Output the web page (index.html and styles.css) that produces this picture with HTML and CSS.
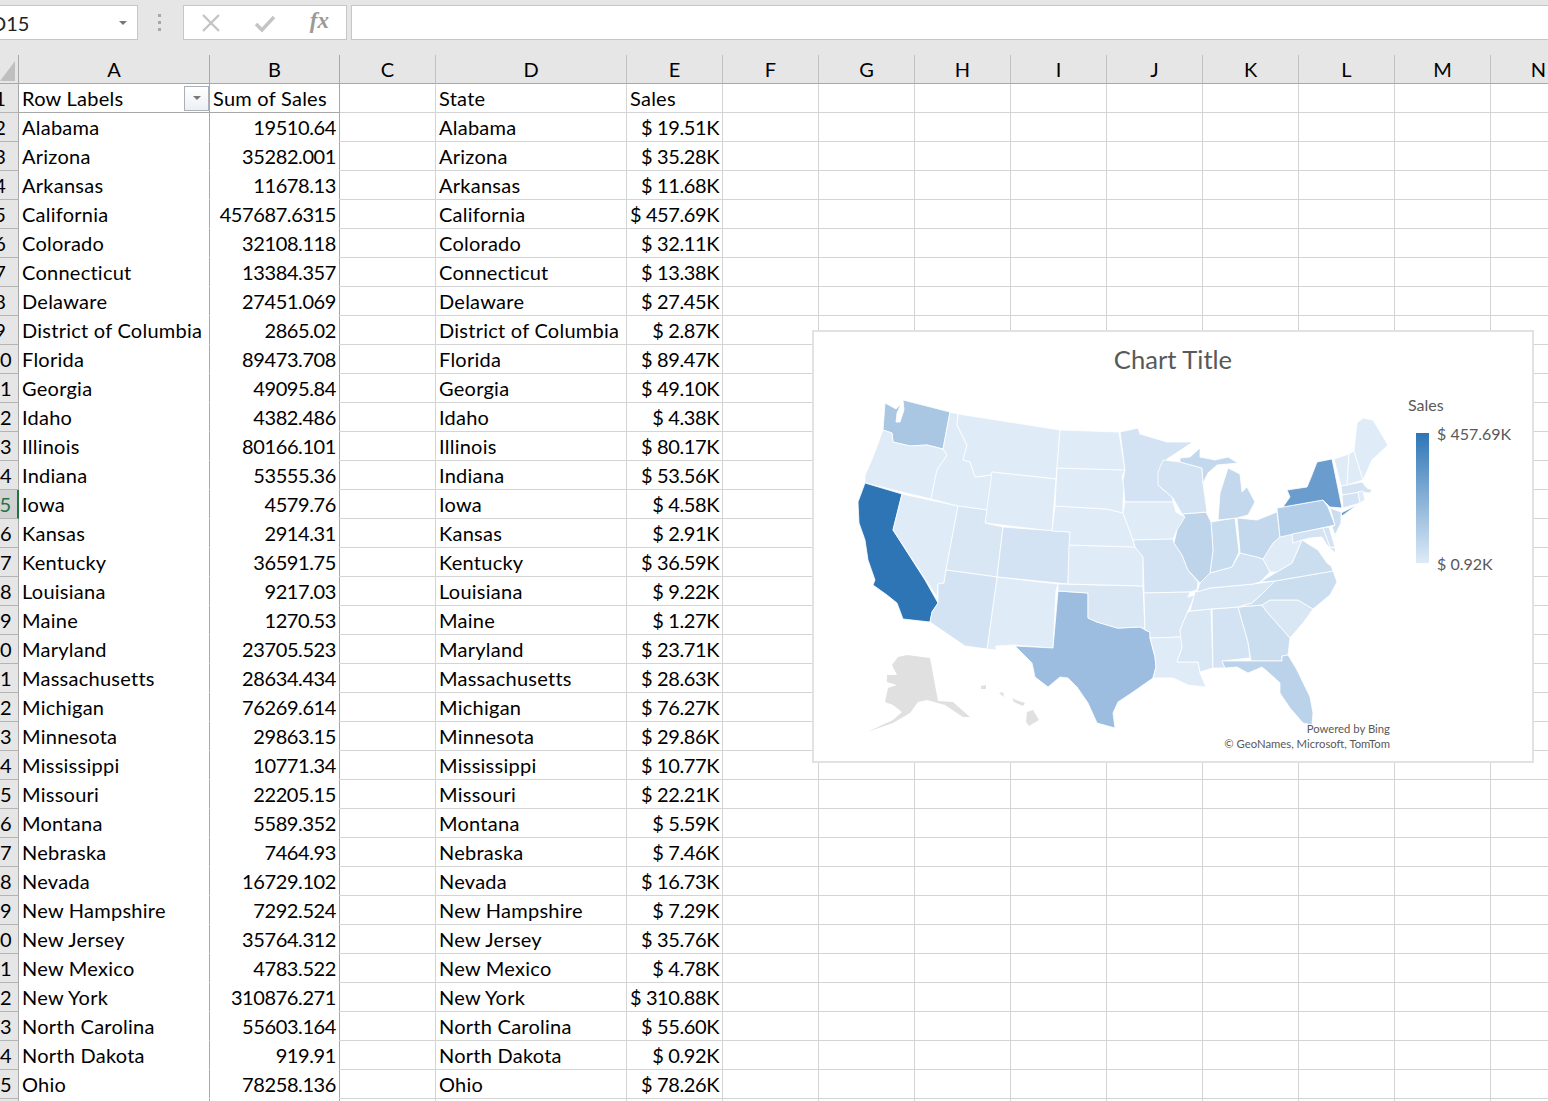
FILE: index.html
```html
<!DOCTYPE html>
<html lang="en">
<head>
  <meta charset="UTF-8">
  <title>Sales by State</title>
  <link rel="stylesheet" href="styles.css">
</head>
<body>

<!-- formula bar -->
<div class="formula-bar">
  <div class="name-box"><span>D15</span><i class="caret"></i></div>
  <div class="grip"><b></b><b></b><b></b></div>
  <div class="fx-box">
    <svg class="fx-icon" width="20" height="20" viewBox="0 0 20 20"><path d="M2 2 L18 18 M18 2 L2 18" fill="none" stroke="#c4c4c4" stroke-width="2.4"/></svg>
    <svg class="fx-icon" width="22" height="20" viewBox="0 0 22 20"><path d="M2 11 L8 17 L20 4" fill="none" stroke="#c4c4c4" stroke-width="3.4"/></svg>
    <span class="fx-text">fx</span>
  </div>
  <div class="formula-input"></div>
</div>

<!-- sheet -->
<table class="sheet">
  <colgroup>
    <col class="c-row"><col class="c-wide"><col class="c-b"><col class="c-std"><col class="c-wide"><col class="c-std">
    <col class="c-std"><col class="c-std"><col class="c-std"><col class="c-std"><col class="c-std"><col class="c-std"><col class="c-std"><col class="c-std"><col class="c-std">
  </colgroup>
  <thead>
    <tr>
      <th class="corner"><svg width="16" height="21" viewBox="0 0 16 21"><polygon points="15,0 15,20 0,20" fill="#bfbfbf"/></svg></th>
      <th class="dark">A</th><th class="dark">B</th><th>C</th><th>D</th><th>E</th><th>F</th><th>G</th><th>H</th><th>I</th><th>J</th><th>K</th><th>L</th><th>M</th><th>N</th>
    </tr>
  </thead>
  <tbody>
    <tr class="pivot-head"><th>1</th><td class="p"><div class="filter-cell">Row Labels<span class="filter-btn"><i class="caret"></i></span></div></td><td class="p">Sum of Sales</td><td></td><td>State</td><td>Sales</td><td></td><td></td><td></td><td></td><td></td><td></td><td></td><td></td><td></td></tr>
    <tr><th>2</th><td class="p">Alabama</td><td class="p n">19510.64</td><td></td><td>Alabama</td><td class="n">$ 19.51K</td><td></td><td></td><td></td><td></td><td></td><td></td><td></td><td></td><td></td></tr>
    <tr><th>3</th><td class="p">Arizona</td><td class="p n">35282.001</td><td></td><td>Arizona</td><td class="n">$ 35.28K</td><td></td><td></td><td></td><td></td><td></td><td></td><td></td><td></td><td></td></tr>
    <tr><th>4</th><td class="p">Arkansas</td><td class="p n">11678.13</td><td></td><td>Arkansas</td><td class="n">$ 11.68K</td><td></td><td></td><td></td><td></td><td></td><td></td><td></td><td></td><td></td></tr>
    <tr><th>5</th><td class="p">California</td><td class="p n">457687.6315</td><td></td><td>California</td><td class="n">$ 457.69K</td><td></td><td></td><td></td><td></td><td></td><td></td><td></td><td></td><td></td></tr>
    <tr><th>6</th><td class="p">Colorado</td><td class="p n">32108.118</td><td></td><td>Colorado</td><td class="n">$ 32.11K</td><td></td><td></td><td></td><td></td><td></td><td></td><td></td><td></td><td></td></tr>
    <tr><th>7</th><td class="p">Connecticut</td><td class="p n">13384.357</td><td></td><td>Connecticut</td><td class="n">$ 13.38K</td><td></td><td></td><td></td><td></td><td></td><td></td><td></td><td></td><td></td></tr>
    <tr><th>8</th><td class="p">Delaware</td><td class="p n">27451.069</td><td></td><td>Delaware</td><td class="n">$ 27.45K</td><td></td><td></td><td></td><td></td><td></td><td></td><td></td><td></td><td></td></tr>
    <tr><th>9</th><td class="p">District of Columbia</td><td class="p n">2865.02</td><td></td><td>District of Columbia</td><td class="n">$ 2.87K</td><td></td><td></td><td></td><td></td><td></td><td></td><td></td><td></td><td></td></tr>
    <tr><th>10</th><td class="p">Florida</td><td class="p n">89473.708</td><td></td><td>Florida</td><td class="n">$ 89.47K</td><td></td><td></td><td></td><td></td><td></td><td></td><td></td><td></td><td></td></tr>
    <tr><th>11</th><td class="p">Georgia</td><td class="p n">49095.84</td><td></td><td>Georgia</td><td class="n">$ 49.10K</td><td></td><td></td><td></td><td></td><td></td><td></td><td></td><td></td><td></td></tr>
    <tr><th>12</th><td class="p">Idaho</td><td class="p n">4382.486</td><td></td><td>Idaho</td><td class="n">$ 4.38K</td><td></td><td></td><td></td><td></td><td></td><td></td><td></td><td></td><td></td></tr>
    <tr><th>13</th><td class="p">Illinois</td><td class="p n">80166.101</td><td></td><td>Illinois</td><td class="n">$ 80.17K</td><td></td><td></td><td></td><td></td><td></td><td></td><td></td><td></td><td></td></tr>
    <tr><th>14</th><td class="p">Indiana</td><td class="p n">53555.36</td><td></td><td>Indiana</td><td class="n">$ 53.56K</td><td></td><td></td><td></td><td></td><td></td><td></td><td></td><td></td><td></td></tr>
    <tr><th class="active">15</th><td class="p">Iowa</td><td class="p n">4579.76</td><td></td><td>Iowa</td><td class="n">$ 4.58K</td><td></td><td></td><td></td><td></td><td></td><td></td><td></td><td></td><td></td></tr>
    <tr><th>16</th><td class="p">Kansas</td><td class="p n">2914.31</td><td></td><td>Kansas</td><td class="n">$ 2.91K</td><td></td><td></td><td></td><td></td><td></td><td></td><td></td><td></td><td></td></tr>
    <tr><th>17</th><td class="p">Kentucky</td><td class="p n">36591.75</td><td></td><td>Kentucky</td><td class="n">$ 36.59K</td><td></td><td></td><td></td><td></td><td></td><td></td><td></td><td></td><td></td></tr>
    <tr><th>18</th><td class="p">Louisiana</td><td class="p n">9217.03</td><td></td><td>Louisiana</td><td class="n">$ 9.22K</td><td></td><td></td><td></td><td></td><td></td><td></td><td></td><td></td><td></td></tr>
    <tr><th>19</th><td class="p">Maine</td><td class="p n">1270.53</td><td></td><td>Maine</td><td class="n">$ 1.27K</td><td></td><td></td><td></td><td></td><td></td><td></td><td></td><td></td><td></td></tr>
    <tr><th>20</th><td class="p">Maryland</td><td class="p n">23705.523</td><td></td><td>Maryland</td><td class="n">$ 23.71K</td><td></td><td></td><td></td><td></td><td></td><td></td><td></td><td></td><td></td></tr>
    <tr><th>21</th><td class="p">Massachusetts</td><td class="p n">28634.434</td><td></td><td>Massachusetts</td><td class="n">$ 28.63K</td><td></td><td></td><td></td><td></td><td></td><td></td><td></td><td></td><td></td></tr>
    <tr><th>22</th><td class="p">Michigan</td><td class="p n">76269.614</td><td></td><td>Michigan</td><td class="n">$ 76.27K</td><td></td><td></td><td></td><td></td><td></td><td></td><td></td><td></td><td></td></tr>
    <tr><th>23</th><td class="p">Minnesota</td><td class="p n">29863.15</td><td></td><td>Minnesota</td><td class="n">$ 29.86K</td><td></td><td></td><td></td><td></td><td></td><td></td><td></td><td></td><td></td></tr>
    <tr><th>24</th><td class="p">Mississippi</td><td class="p n">10771.34</td><td></td><td>Mississippi</td><td class="n">$ 10.77K</td><td></td><td></td><td></td><td></td><td></td><td></td><td></td><td></td><td></td></tr>
    <tr><th>25</th><td class="p">Missouri</td><td class="p n">22205.15</td><td></td><td>Missouri</td><td class="n">$ 22.21K</td><td></td><td></td><td></td><td></td><td></td><td></td><td></td><td></td><td></td></tr>
    <tr><th>26</th><td class="p">Montana</td><td class="p n">5589.352</td><td></td><td>Montana</td><td class="n">$ 5.59K</td><td></td><td></td><td></td><td></td><td></td><td></td><td></td><td></td><td></td></tr>
    <tr><th>27</th><td class="p">Nebraska</td><td class="p n">7464.93</td><td></td><td>Nebraska</td><td class="n">$ 7.46K</td><td></td><td></td><td></td><td></td><td></td><td></td><td></td><td></td><td></td></tr>
    <tr><th>28</th><td class="p">Nevada</td><td class="p n">16729.102</td><td></td><td>Nevada</td><td class="n">$ 16.73K</td><td></td><td></td><td></td><td></td><td></td><td></td><td></td><td></td><td></td></tr>
    <tr><th>29</th><td class="p">New Hampshire</td><td class="p n">7292.524</td><td></td><td>New Hampshire</td><td class="n">$ 7.29K</td><td></td><td></td><td></td><td></td><td></td><td></td><td></td><td></td><td></td></tr>
    <tr><th>30</th><td class="p">New Jersey</td><td class="p n">35764.312</td><td></td><td>New Jersey</td><td class="n">$ 35.76K</td><td></td><td></td><td></td><td></td><td></td><td></td><td></td><td></td><td></td></tr>
    <tr><th>31</th><td class="p">New Mexico</td><td class="p n">4783.522</td><td></td><td>New Mexico</td><td class="n">$ 4.78K</td><td></td><td></td><td></td><td></td><td></td><td></td><td></td><td></td><td></td></tr>
    <tr><th>32</th><td class="p">New York</td><td class="p n">310876.271</td><td></td><td>New York</td><td class="n">$ 310.88K</td><td></td><td></td><td></td><td></td><td></td><td></td><td></td><td></td><td></td></tr>
    <tr><th>33</th><td class="p">North Carolina</td><td class="p n">55603.164</td><td></td><td>North Carolina</td><td class="n">$ 55.60K</td><td></td><td></td><td></td><td></td><td></td><td></td><td></td><td></td><td></td></tr>
    <tr><th>34</th><td class="p">North Dakota</td><td class="p n">919.91</td><td></td><td>North Dakota</td><td class="n">$ 0.92K</td><td></td><td></td><td></td><td></td><td></td><td></td><td></td><td></td><td></td></tr>
    <tr><th>35</th><td class="p">Ohio</td><td class="p n">78258.136</td><td></td><td>Ohio</td><td class="n">$ 78.26K</td><td></td><td></td><td></td><td></td><td></td><td></td><td></td><td></td><td></td></tr>
    <tr><th></th><td class="p"></td><td class="p"></td><td></td><td></td><td></td><td></td><td></td><td></td><td></td><td></td><td></td><td></td><td></td><td></td></tr>
  </tbody>
</table>

<!-- map chart, floats over the sheet -->
<div class="chart">
  <svg class="map" width="718" height="429" viewBox="814 332 718 429">
    <g class="states">
      <polygon class="wa" points="885,403 896,409 901,404 897,413 896,422 900,422 904,410 903,400 950,412 943,449 927,445 910,446 893,442 892,433 883,430"/>
      <polygon class="lt" points="883,430 892,433 893,442 910,446 927,445 943,449 947,455 937,470 931,499 865,483 865,475 873,457"/>
      <polygon class="ca" points="865,483 902,494 893,530 925,580 938,603 932,612 930,622 903,619 897,603 887,595 873,585 875,580 868,560 865,540 859,523 858,502"/>
      <polygon class="lt" points="902,494 958,506 946,570 944,583 938,584 937,597 893,530"/>
      <polygon class="lt" points="950,412 958,414 957,425 967,445 963,460 970,462 975,477 992,475 987,510 958,506 931,499 937,470 947,455 943,449"/>
      <polygon class="lt" points="958,414 1060,430 1057,468 1056,479 992,472 991,475 975,477 970,462 963,460 967,445 957,425"/>
      <polygon class="lt" points="992,472 1056,479 1052,531 985,523"/>
      <polygon class="m1" points="958,506 987,510 985,523 1003,527 997,577 946,570"/>
      <polygon class="m2" points="1003,527 1070,532 1068,584 997,577"/>
      <polygon class="lt" points="997,577 1058,584 1056,591 1053,648 1014,645 996,646 996,650 987,649"/>
      <polygon class="m2" points="997,577 946,570 944,583 938,584 938,603 932,612 930,622 965,646 987,649"/>
      <polygon class="tx" points="1058,591 1088,593 1088,618 1097,622 1117,628 1120,628 1140,627 1150,632 1150,638 1155,657 1156,667 1153,678 1133,692 1118,702 1113,713 1115,728 1097,723 1088,703 1077,687 1068,678 1060,677 1048,687 1035,677 1032,663 1015,646 1053,648"/>
      <polygon class="m1" points="1058,584 1143,586 1145,630 1150,632 1140,627 1120,628 1117,628 1097,622 1088,618 1088,593 1058,591"/>
      <polygon class="lt" points="1069,545 1135,547 1143,557 1143,586 1068,584"/>
      <polygon class="lt" points="1055,506 1107,509 1123,513 1130,532 1135,547 1069,545 1070,532 1052,531"/>
      <polygon class="lt" points="1057,468 1125,470 1122,477 1124,485 1123,502 1123,513 1107,509 1055,506"/>
      <polygon class="lt" points="1060,430 1119,432 1125,470 1057,468"/>
      <polygon class="m2" points="1120,432 1138,428 1140,434 1167,442 1193,442 1167,459 1158,472 1160,487 1172,497 1173,502 1125,502 1123,480 1125,470"/>
      <polygon class="lt" points="1125,502 1173,502 1176,512 1185,517 1182,527 1177,530 1173,539 1133,540 1123,513"/>
      <polygon class="m2" points="1133,540 1173,539 1174,543 1182,555 1188,570 1198,582 1197,590 1190,592 1144,593 1143,557 1135,547"/>
      <polygon class="m1" points="1144,593 1190,592 1188,597 1195,595 1187,613 1180,630 1182,637 1150,638 1150,632 1145,630"/>
      <polygon class="lt" points="1150,638 1182,637 1182,648 1177,662 1198,662 1200,673 1206,687 1188,685 1173,678 1153,678 1156,667 1155,657"/>
      <polygon class="m1" points="1190,611 1211,609 1213,668 1200,672 1198,662 1177,662 1182,648 1180,630 1187,613"/>
      <polygon class="m2" points="1212,609 1238,607 1248,642 1250,658 1222,661 1225,668 1213,668"/>
      <polygon class="m3" points="1238,607 1262,605 1267,612 1283,630 1290,638 1288,655 1282,656 1282,661 1251,661 1248,642"/>
      <polygon class="fl" points="1222,661 1251,661 1282,661 1282,656 1288,655 1297,670 1310,697 1313,713 1312,725 1303,723 1290,708 1280,693 1280,683 1268,672 1262,667 1248,673 1237,667 1225,668"/>
      <polygon class="m1" points="1262,605 1270,600 1298,600 1313,609 1303,623 1290,638 1283,630 1267,612"/>
      <polygon class="m3" points="1252,603 1263,593 1275,581 1333,571 1337,582 1330,595 1313,609 1298,600 1270,600 1262,605 1238,607"/>
      <polygon class="m1" points="1195,592 1210,588 1253,584 1275,581 1263,593 1252,603 1238,607 1211,609 1190,611"/>
      <polygon class="m2" points="1200,583 1210,573 1232,567 1240,553 1257,557 1263,559 1270,572 1260,582 1253,584 1210,588 1197,592"/>
      <polygon class="m3" points="1260,582 1277,572 1292,563 1302,540 1313,547 1318,550 1327,563 1331,566 1333,571 1275,581"/>
      <polygon class="lt" points="1263,559 1273,543 1280,537 1292,534 1293,543 1302,540 1292,563 1277,572 1270,572"/>
      <polygon class="mi" points="1237,518 1257,520 1277,512 1280,537 1273,543 1263,559 1257,557 1240,553 1239,540"/>
      <polygon class="m4" points="1211,522 1235,518 1239,552 1232,567 1210,573 1213,550"/>
      <polygon class="il" points="1182,514 1206,512 1211,522 1213,550 1210,573 1200,583 1188,570 1182,555 1174,543 1177,530 1185,517"/>
      <polygon class="m2" points="1163,460 1180,462 1202,468 1203,483 1207,512 1182,514 1173,498 1158,485 1158,472"/>
      <polygon class="mi" points="1218,520 1220,493 1228,468 1240,474 1242,492 1247,487 1255,502 1248,515 1237,518"/>
      <polygon class="mi" points="1180,458 1190,457 1200,448 1200,457 1215,460 1228,457 1238,463 1228,464 1217,465 1208,473 1203,483 1202,468 1180,462"/>
      <polygon class="pa" points="1277,508 1323,500 1328,507 1335,525 1280,537"/>
      <polygon class="ny" points="1283,507 1290,497 1287,490 1307,487 1312,475 1317,462 1332,459 1342,508 1330,507 1323,500"/>
      <polygon class="ny" points="1341,513 1357,505 1342,516"/>
      <polygon class="m3" points="1330,508 1341,512 1341,523 1335,535 1332,527 1335,525"/>
      <polygon class="m2" points="1292,534 1323,528 1330,547 1335,548 1335,553 1327,545 1322,537 1310,538 1302,540 1293,543"/>
      <polygon class="m2" points="1323,528 1329,527 1335,547 1330,547"/>
      <polygon class="m2" points="1342,495 1358,492 1360,503 1343,508"/>
      <polygon class="m2" points="1341,486 1362,482 1367,488 1372,490 1370,493 1360,492 1342,495"/>
      <polygon class="lt" points="1358,492 1363,491 1365,500 1360,503"/>
      <polygon class="lt" points="1334,459 1349,454 1347,485 1341,486"/>
      <polygon class="lt" points="1349,454 1354,451 1363,480 1347,485"/>
      <polygon class="lt" points="1354,451 1357,423 1363,418 1373,420 1388,445 1372,460 1363,480"/>
    </g>
    <g class="no-data">
      <polygon points="892,665 898,657 907,655 930,658 938,701 953,702 970,717 963,717 945,705 927,700 918,702 910,713 893,723 867,732 893,720 902,712 893,705 885,702 888,688 897,685 887,682 887,675 897,675"/>
      <polygon points="1027,712 1033,710 1039,720 1029,726 1026,722"/>
      <polygon points="981,686 986,685 986,689 981,689"/>
      <polygon points="999,693 1003,692 1004,697"/>
      <polygon points="1012,698 1016,700 1025,703 1023,706 1014,702"/>
    </g>
  </svg>
  <div class="chart-title">Chart Title</div>
  <div class="legend">
    <div class="legend-name">Sales</div>
    <div class="legend-body">
      <div class="legend-bar"></div>
      <div class="legend-labels"><span>$ 457.69K</span><span>$ 0.92K</span></div>
    </div>
  </div>
  <div class="credit">Powered by Bing<br>© GeoNames, Microsoft, TomTom</div>
</div>

</body>
</html>
```

FILE: styles.css
```css
html, body { margin: 0; height: 100%; overflow: hidden; background: #fff; }
body { font-family: Lato, "Open Sans", sans-serif; color: #000; }

/* formula bar */
.formula-bar {
  display: flex; align-items: flex-start; height: 55px; box-sizing: border-box;
  padding-top: 5px; background: #e6e6e6;
}
.name-box {
  display: flex; align-items: center; justify-content: space-between; box-sizing: border-box;
  margin-left: -10px; width: 148px; height: 35px; padding: 0 10px 0 0;
  background: #fff; border: 1px solid #c6c6c6; font-size: 20px; color: #222;
}
.caret {
  display: inline-block; width: 0; height: 0;
  border-left: 4px solid transparent; border-right: 4px solid transparent; border-top: 4px solid #777;
}
.grip {
  display: flex; flex-direction: column; align-items: center; gap: 4px;
  width: 43px; margin-right: 2px; height: 35px; justify-content: center;
}
.grip b { width: 3px; height: 3px; background: #a8a8a8; }
.fx-box {
  display: flex; align-items: center; justify-content: space-between; box-sizing: border-box;
  width: 164px; height: 35px; padding: 0 17px;
  background: #fff; border: 1px solid #c6c6c6;
}
.fx-text { font: italic bold 23px "Liberation Serif", serif; color: #9a9a9a; margin-bottom: 3px; }
.formula-input {
  flex: 1; height: 35px; margin: 0 -2px 0 4px; box-sizing: border-box;
  background: #fff; border: 1px solid #c6c6c6;
}

/* sheet */
.sheet {
  table-layout: fixed; border-collapse: separate; border-spacing: 0;
  width: 1603px; margin-left: -18px; font-size: 20px;
}
.c-row { width: 37px; }
.c-wide { width: 191px; }
.c-b { width: 130px; }
.c-std { width: 96px; }
.sheet th, .sheet td {
  box-sizing: border-box; height: 29px; padding: 0 3px; white-space: nowrap; overflow: hidden;
  font-weight: 400; text-align: left; letter-spacing: .25px;
  border-right: 1px solid #d4d4d4; border-bottom: 1px solid #d4d4d4;
}
.sheet th {
  text-align: center; background: #e6e6e6; padding: 0; letter-spacing: 0;
  border-right-color: #b4b4b4; border-bottom-color: #b4b4b4;
}
.sheet thead th { border-right-color: #c0c0c0; border-bottom-color: #a8a8a8; }
.sheet thead th.dark, .sheet thead th.corner { border-right-color: #a8a8a8; }
.sheet .corner { text-align: right; }
.corner svg { display: block; margin: 4px 2px 0 auto; }
.sheet tbody th { border-right-color: #a8a8a8; }
.sheet tbody th.active {
  background: #d2d2d2; color: #217346; border-right: 2px solid #217346;
}
.sheet td.n { text-align: right; padding-right: 3px; letter-spacing: -.4px; }
.sheet td.p { border-bottom-color: #fff; border-right-color: #a8a8a8; }
.pivot-head td.p { border-bottom-color: #a8a8a8; }

.filter-cell { display: flex; align-items: center; justify-content: space-between; margin-right: -3px; }
.filter-btn {
  display: flex; align-items: center; justify-content: center; box-sizing: border-box;
  width: 25px; height: 25px; border: 1px solid #aab0b8;
  background: linear-gradient(#fff, #eceff3);
}

/* chart */
.chart {
  position: absolute; left: 812px; top: 330px; width: 722px; height: 433px;
  box-sizing: border-box; background: #fff; border: 2px solid #e2e2e2; color: #595959;
}
.map { position: absolute; left: 0; top: 0; }
.states polygon { stroke: #fff; stroke-width: .8; stroke-linejoin: round; }
.no-data polygon { fill: #e0e0e0; }
.lt { fill: #dfebf7; }
.m1 { fill: #d9e7f5; }
.m2 { fill: #d3e3f3; }
.m3 { fill: #cadef0; }
.m4 { fill: #c8dcef; }
.mi { fill: #c3d8ed; }
.il { fill: #bdd4eb; }
.fl { fill: #bad2ea; }
.pa { fill: #b3cee8; }
.wa { fill: #a9c7e3; }
.tx { fill: #9cbde0; }
.ny { fill: #6a9ccd; }
.ca { fill: #2e75b6; }

.chart-title {
  position: relative; padding-top: 11px; text-align: center; font-size: 25.6px; line-height: 32px;
}
.legend { position: absolute; left: 594px; top: 63px; font-size: 16px; }
.legend-name { line-height: 20px; }
.legend-body { display: flex; gap: 8px; margin-left: 8px; margin-top: 18px; }
.legend-bar { width: 13px; height: 130px; background: linear-gradient(#2e75b6, #deebf7); }
.legend-labels {
  display: flex; flex-direction: column; justify-content: space-between;
  height: 148px; margin-top: -8px; line-height: 18px;
}
.credit {
  position: absolute; right: 142px; top: 389px; text-align: right; font-size: 11.3px; line-height: 15px;
}
```
